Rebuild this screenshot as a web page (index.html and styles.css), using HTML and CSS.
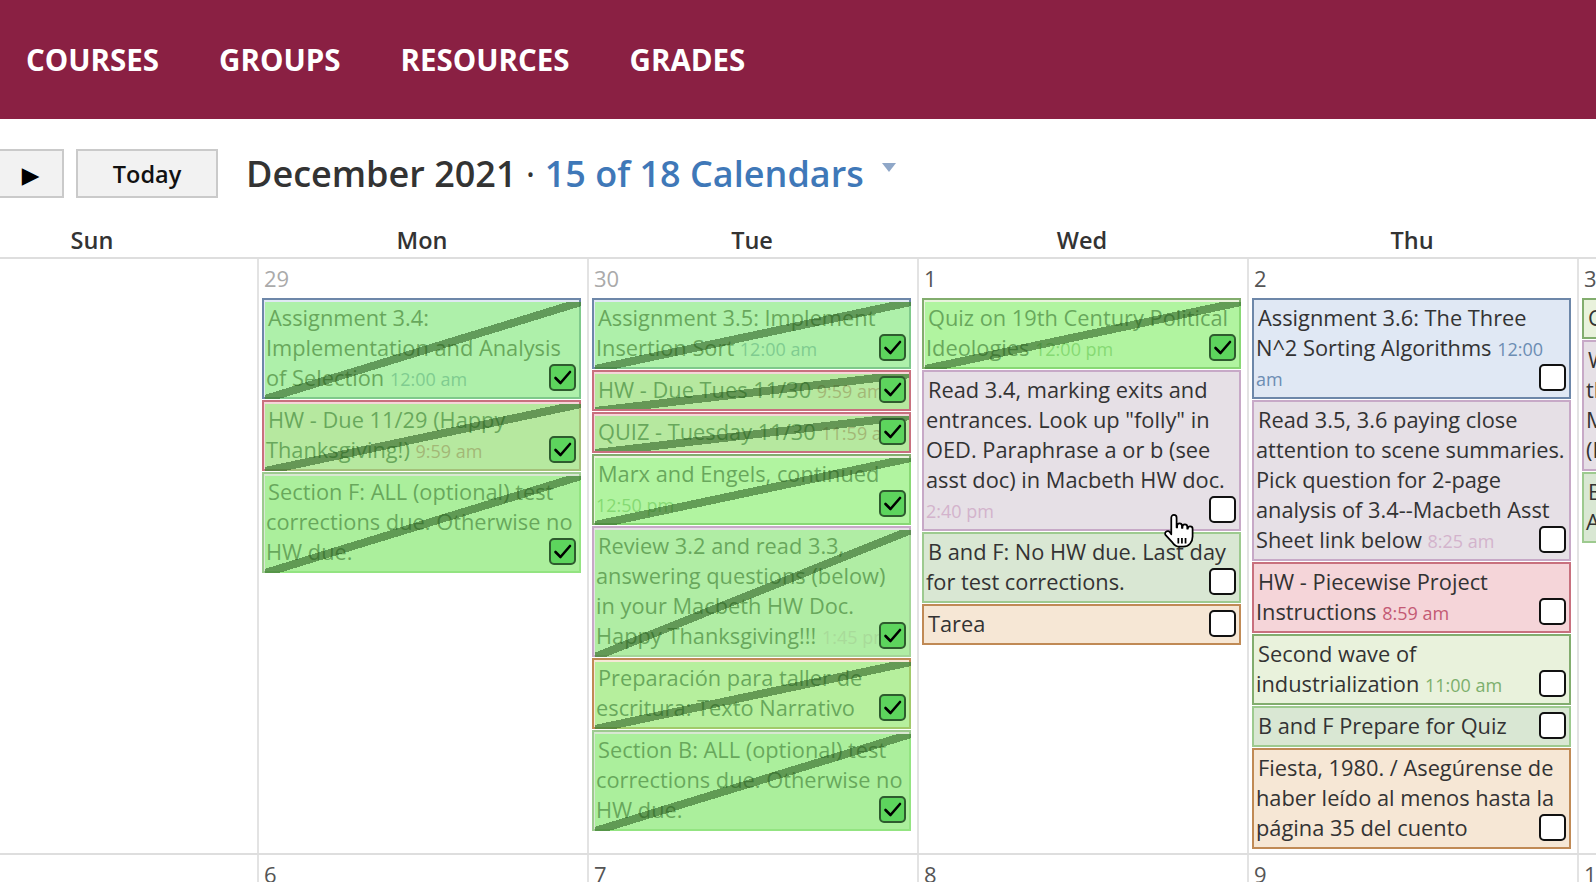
FILE: index.html
```html
<!DOCTYPE html>
<html lang="en">
<head>
<meta charset="utf-8">
<title>Calendar</title>
<link rel="stylesheet" href="styles.css">
</head>
<body>
<header class="nav">
  <a href="#">COURSES</a>
  <a href="#">GROUPS</a>
  <a href="#">RESOURCES</a>
  <a href="#">GRADES</a>
</header>
<main class="cal">
  <div class="toolbar">
    <div class="btn prev">&#9664;</div>
    <div class="btn next">&#9654;</div>
    <div class="btn today">Today</div>
    <div class="title">December 2021<span class="dot">&nbsp;·&nbsp;</span><span class="cals">15 of 18 Calendars</span><span class="caret"></span></div>
  </div>
  <div class="dow">
    <div>Sun</div><div>Mon</div><div>Tue</div><div>Wed</div><div>Thu</div><div>Fri</div><div>Sat</div>
  </div>
  <div class="week">
    <div class="cell"><div class="num other">28</div></div>
    <div class="cell">
      <div class="num other">29</div>
      <div class="ev blue done">Assignment 3.4: Implementation and Analysis of Selection <span class="t">12:00 am</span><span class="cb"><svg viewBox="0 0 23 23"><path d="M4.5 12 L9.5 17 L19 6"/></svg></span></div>
      <div class="ev red done">HW - Due 11/29 (Happy Thanksgiving!) <span class="t">9:59 am</span><span class="cb"><svg viewBox="0 0 23 23"><path d="M4.5 12 L9.5 17 L19 6"/></svg></span></div>
      <div class="ev bf done">Section F: ALL (optional) test corrections due. Otherwise no HW due.<span class="cb"><svg viewBox="0 0 23 23"><path d="M4.5 12 L9.5 17 L19 6"/></svg></span></div>
    </div>
    <div class="cell">
      <div class="num other">30</div>
      <div class="ev blue done">Assignment 3.5: Implement Insertion Sort <span class="t">12:00 am</span><span class="cb"><svg viewBox="0 0 23 23"><path d="M4.5 12 L9.5 17 L19 6"/></svg></span></div>
      <div class="ev red done nw">HW - Due Tues 11/30 <span class="t">9:59 am</span><span class="cb"><svg viewBox="0 0 23 23"><path d="M4.5 12 L9.5 17 L19 6"/></svg></span></div>
      <div class="ev red done nw">QUIZ - Tuesday 11/30 <span class="t">11:59 am</span><span class="cb"><svg viewBox="0 0 23 23"><path d="M4.5 12 L9.5 17 L19 6"/></svg></span></div>
      <div class="ev hist done">Marx and Engels, continued <span class="t">12:50 pm</span><span class="cb"><svg viewBox="0 0 23 23"><path d="M4.5 12 L9.5 17 L19 6"/></svg></span></div>
      <div class="ev eng done">Review 3.2 and read 3.3, answering questions (below) in your Macbeth HW Doc. Happy Thanksgiving!!! <span class="t">1:45 pm</span><span class="cb"><svg viewBox="0 0 23 23"><path d="M4.5 12 L9.5 17 L19 6"/></svg></span></div>
      <div class="ev spa done">Preparación para taller de escritura: Texto Narrativo<span class="cb"><svg viewBox="0 0 23 23"><path d="M4.5 12 L9.5 17 L19 6"/></svg></span></div>
      <div class="ev bf done">Section B: ALL (optional) test corrections due. Otherwise no HW due.<span class="cb"><svg viewBox="0 0 23 23"><path d="M4.5 12 L9.5 17 L19 6"/></svg></span></div>
    </div>
    <div class="cell">
      <div class="num">1</div>
      <div class="ev hist done">Quiz on 19th Century Political Ideologies <span class="t">12:00 pm</span><span class="cb"><svg viewBox="0 0 23 23"><path d="M4.5 12 L9.5 17 L19 6"/></svg></span></div>
      <div class="ev eng">Read 3.4, marking exits and entrances. Look up "folly" in OED. Paraphrase a or b (see asst doc) in Macbeth HW doc. <span class="t">2:40 pm</span><span class="cb"></span></div>
      <div class="ev bf">B and F: No HW due. Last day for test corrections.<span class="cb"></span></div>
      <div class="ev spa">Tarea<span class="cb"></span></div>
    </div>
    <div class="cell">
      <div class="num">2</div>
      <div class="ev blue">Assignment 3.6: The Three N^2 Sorting Algorithms <span class="t">12:00 am</span><span class="cb"></span></div>
      <div class="ev eng">Read 3.5, 3.6 paying close attention to scene summaries. Pick question for 2-page analysis of 3.4--Macbeth Asst Sheet link below <span class="t">8:25 am</span><span class="cb"></span></div>
      <div class="ev red">HW - Piecewise Project Instructions <span class="t">8:59 am</span><span class="cb"></span></div>
      <div class="ev hist">Second wave of industrialization <span class="t">11:00 am</span><span class="cb"></span></div>
      <div class="ev bf">B and F Prepare for Quiz<span class="cb"></span></div>
      <div class="ev spa">Fiesta, 1980. / Asegúrense de haber leído al menos hasta la página 35 del cuento<span class="cb"></span></div>
    </div>
    <div class="cell">
      <div class="num">3</div>
      <div class="ev hist">Chapter 5 Quiz<span class="cb"></span></div>
      <div class="ev eng">Write a paragraph on<br>the witches' prophecy in<br>Macbeth, Act 4<br>(In your HW doc)<span class="cb"></span></div>
      <div class="ev bf">B and F: Review for<br>Assessment<span class="cb"></span></div>
    </div>
    <div class="cell"><div class="num">4</div></div>
  </div>
  <div class="week last">
    <div class="cell"><div class="num">5</div></div>
    <div class="cell"><div class="num">6</div></div>
    <div class="cell"><div class="num">7</div></div>
    <div class="cell"><div class="num">8</div></div>
    <div class="cell"><div class="num">9</div></div>
    <div class="cell"><div class="num">10</div></div>
    <div class="cell"><div class="num">11</div></div>
  </div>
</main>
<svg class="hand" viewBox="0 0 24 28" aria-hidden="true">
  <path d="M8.2 1.2c1.2 0 2 .9 2 2.1v7.3h.4V9.4c0-1 .8-1.8 1.8-1.8s1.8.8 1.8 1.8v1.6h.4v-.9c0-1 .8-1.8 1.8-1.8s1.8.8 1.8 1.8v1.4h.4c0-1 .8-1.7 1.8-1.7s1.8.8 1.8 1.8v5.8c0 4.3-2.8 7.6-7 7.6h-2.6c-2.5 0-4.1-1.1-5.4-3L2 16.4c-.7-1-.5-2.2.5-2.8.9-.6 2.1-.3 2.7.6l1 1.5V3.3c0-1.2.8-2.1 2-2.1z" fill="#fff" stroke="#000" stroke-width="1.3" stroke-linejoin="round"/>
  <path d="M11.5 18.5v4.2M14.2 18.5v4.2M16.9 18.5v4.2" stroke="#000" stroke-width="1.3"/>
</svg>
</body>
</html>
```
FILE: styles.css
```css
* { box-sizing: border-box; }
html, body { margin: 0; padding: 0; }
body {
  font-family: "Open Sans", "DejaVu Sans", sans-serif;
  color: #333;
  background: #fff;
  width: 1596px;
  height: 882px;
  overflow: hidden;
  position: relative;
}
.nav {
  height: 119px;
  background: #8a2043;
  display: flex;
  align-items: center;
  gap: 60px;
  padding-left: 26px;
}
.nav a {
  color: #fff;
  font-weight: 700;
  font-size: 29.5px;
  text-decoration: none;
}
.cal {
  margin-left: -73px;
  width: 2310px;
}
.toolbar {
  display: flex;
  align-items: center;
  margin-top: 30px;
  height: 49px;
}
.btn {
  height: 49px;
  border: 2px solid #cacaca;
  background: #f2f2f2;
  display: flex;
  align-items: center;
  justify-content: center;
  font-size: 23.5px;
  font-weight: 600;
  color: #111;
}
.prev { width: 56px; font-size: 23px; }
.next { width: 67px; margin-left: 14px; font-size: 23px; color: #000; }
.today { width: 142px; margin-left: 12px; }
.title {
  margin-left: 28px;
  font-size: 36px;
  font-weight: 600;
  color: #333;
  display: flex;
  align-items: center;
  white-space: nowrap;
}
.dot { font-weight: 400; }
.cals { color: #3f78b8; }
.caret {
  width: 0;
  height: 0;
  border-left: 7px solid transparent;
  border-right: 7px solid transparent;
  border-top: 9px solid #8fa7c8;
  margin-left: 18px;
  transform: translateY(-6px);
}
.dow {
  display: grid;
  grid-template-columns: repeat(7, 330px);
  margin-top: 23px;
  height: 38px;
  border-bottom: 2px solid #dedede;
}
.dow div {
  text-align: center;
  font-size: 23.5px;
  font-weight: 600;
  line-height: 38px;
  color: #333;
}
.week {
  display: grid;
  grid-template-columns: repeat(7, 330px);
  border-bottom: 2px solid #dedede;
}
.week.last { min-height: 200px; }
.cell {
  border-left: 2px solid #e3e3e3;
  padding: 0 6px 3px 3px;
}
.num {
  height: 39px;
  line-height: 39px;
  font-size: 22px;
  color: #555;
  padding-left: 2px;
}
.num.other { color: #aaa; }
.ev {
  position: relative;
  border: 2px solid #999;
  padding: 3px 1px 4px 2px;
  font-size: 21.8px;
  line-height: 30px;
  margin-bottom: 1px;
  color: #333;
  text-indent: 2px;
}
.ev.nw { white-space: nowrap; overflow: hidden; }
.t { font-size: 18px; line-height: 1; }
.blue { border-color: #6d87a9; background: #e0e8f4; }
.blue .t { color: #6c8db3; }
.red { border-color: #c8707e; background: #f5d5d9; }
.red .t { color: #c45a74; }
.eng { border-color: #c7a9c7; background: #e6e0e6; }
.eng .t { color: #d3b3cc; }
.hist { border-color: #82ad6e; background: #e9f2dc; }
.hist .t { color: #7caf6c; }
.bf { border-color: #9dca8f; background: #d9e7d3; }
.spa { border-color: #c08a55; background: #f6e7d5; }
.done::after {
  content: "";
  position: absolute;
  top: 2px;
  left: 1px;
  right: -2px;
  bottom: -2px;
  background:
    linear-gradient(to bottom right,
      transparent calc(50% - 4px),
      rgba(35, 85, 25, 0.55) calc(50% - 4px),
      rgba(35, 85, 25, 0.55) calc(50% + 4px),
      transparent calc(50% + 4px)),
    rgba(140, 245, 120, 0.6);
  pointer-events: none;
}
.cb {
  position: absolute;
  right: 3px;
  bottom: 6px;
  width: 27px;
  height: 27px;
  border: 2px solid #111;
  border-radius: 5px;
  background: #fff;
  z-index: 2;
}
.done .cb {
  background: #5dd45d;
  border-color: #2e5b2e;
}
.cb svg {
  display: block;
  width: 23px;
  height: 23px;
}
.cb path {
  fill: none;
  stroke: #000;
  stroke-width: 2.6;
  stroke-linecap: round;
  stroke-linejoin: round;
}
.hand {
  position: absolute;
  left: 1163px;
  top: 513px;
  width: 32px;
  height: 38px;
  z-index: 5;
}
```
